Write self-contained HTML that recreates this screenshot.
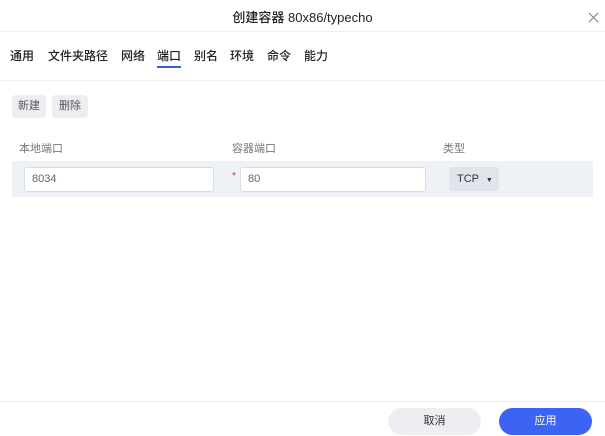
<!DOCTYPE html><html><head><meta charset="utf-8"><style>
body{margin:0;width:605px;height:436px;background:#fff;font-family:"Liberation Sans","Noto Sans CJK SC",sans-serif;position:relative;overflow:hidden;color:#333}
.a{position:absolute}
.t{position:absolute;top:47px;font-size:12px;color:#222;font-weight:500}
</style></head><body>
<div class="a" style="left:0;top:7px;width:605px;text-align:center;font-size:13px;color:#222;font-weight:500">创建容器 80x86/typecho</div>
<svg class="a" style="left:588px;top:12px" width="11" height="11" viewBox="0 0 11 11"><path d="M1 1L10 10M10 1L1 10" stroke="#888" stroke-width="1.2"/></svg>
<div class="a" style="left:0;top:31px;width:605px;height:1px;background:#eceef1"></div>
<div class="t" style="left:10px">通用</div>
<div class="t" style="left:48px">文件夹路径</div>
<div class="t" style="left:121px">网络</div>
<div class="t" style="left:157px">端口</div>
<div class="t" style="left:194px">别名</div>
<div class="t" style="left:230px">环境</div>
<div class="t" style="left:267px">命令</div>
<div class="t" style="left:304px">能力</div>
<div class="a" style="left:157px;top:66px;width:24px;height:2px;background:#3b5bdb"></div>
<div class="a" style="left:0;top:80px;width:605px;height:1px;background:#eceef1"></div>
<div class="a" style="left:12px;top:95px;width:34px;height:23px;background:#edeef2;border-radius:4px;font-size:11px;line-height:23px;text-align:center;color:#555">新建</div>
<div class="a" style="left:52px;top:95px;width:36px;height:23px;background:#edeef2;border-radius:4px;font-size:11px;line-height:23px;text-align:center;color:#555">删除</div>
<div class="a" style="left:19px;top:140px;font-size:11px;color:#777">本地端口</div>
<div class="a" style="left:232px;top:140px;font-size:11px;color:#777">容器端口</div>
<div class="a" style="left:443px;top:140px;font-size:11px;color:#777">类型</div>
<div class="a" style="left:12px;top:161px;width:581px;height:36px;background:#eef1f6"></div>
<div class="a" style="left:24px;top:167px;width:190px;height:25px;background:#fff;border:1px solid #d8dce3;border-radius:3px;font-size:11px;line-height:23px;padding-left:7px;box-sizing:border-box;color:#666">8034</div>
<div class="a" style="left:232px;top:171px;font-size:10px;color:#e03131">*</div>
<div class="a" style="left:240px;top:167px;width:186px;height:25px;background:#fff;border:1px solid #d8dce3;border-radius:3px;font-size:11px;line-height:23px;padding-left:7px;box-sizing:border-box;color:#666">80</div>
<div class="a" style="left:449px;top:167px;width:50px;height:24px;background:#e1e4ea;border-radius:3px;font-size:11px;line-height:24px;padding-left:8px;box-sizing:border-box;color:#333">TCP <span style="font-size:7px;margin-left:4px">▼</span></div>
<div class="a" style="left:0;top:401px;width:605px;height:1px;background:#eceef1"></div>
<div class="a" style="left:388px;top:408px;width:93px;height:27px;background:#edeef2;border-radius:14px;font-size:11px;line-height:27px;text-align:center">取消</div>
<div class="a" style="left:499px;top:408px;width:93px;height:27px;background:#3d63f5;border-radius:14px;font-size:11px;line-height:27px;text-align:center;color:#fff">应用</div>
</body></html>
